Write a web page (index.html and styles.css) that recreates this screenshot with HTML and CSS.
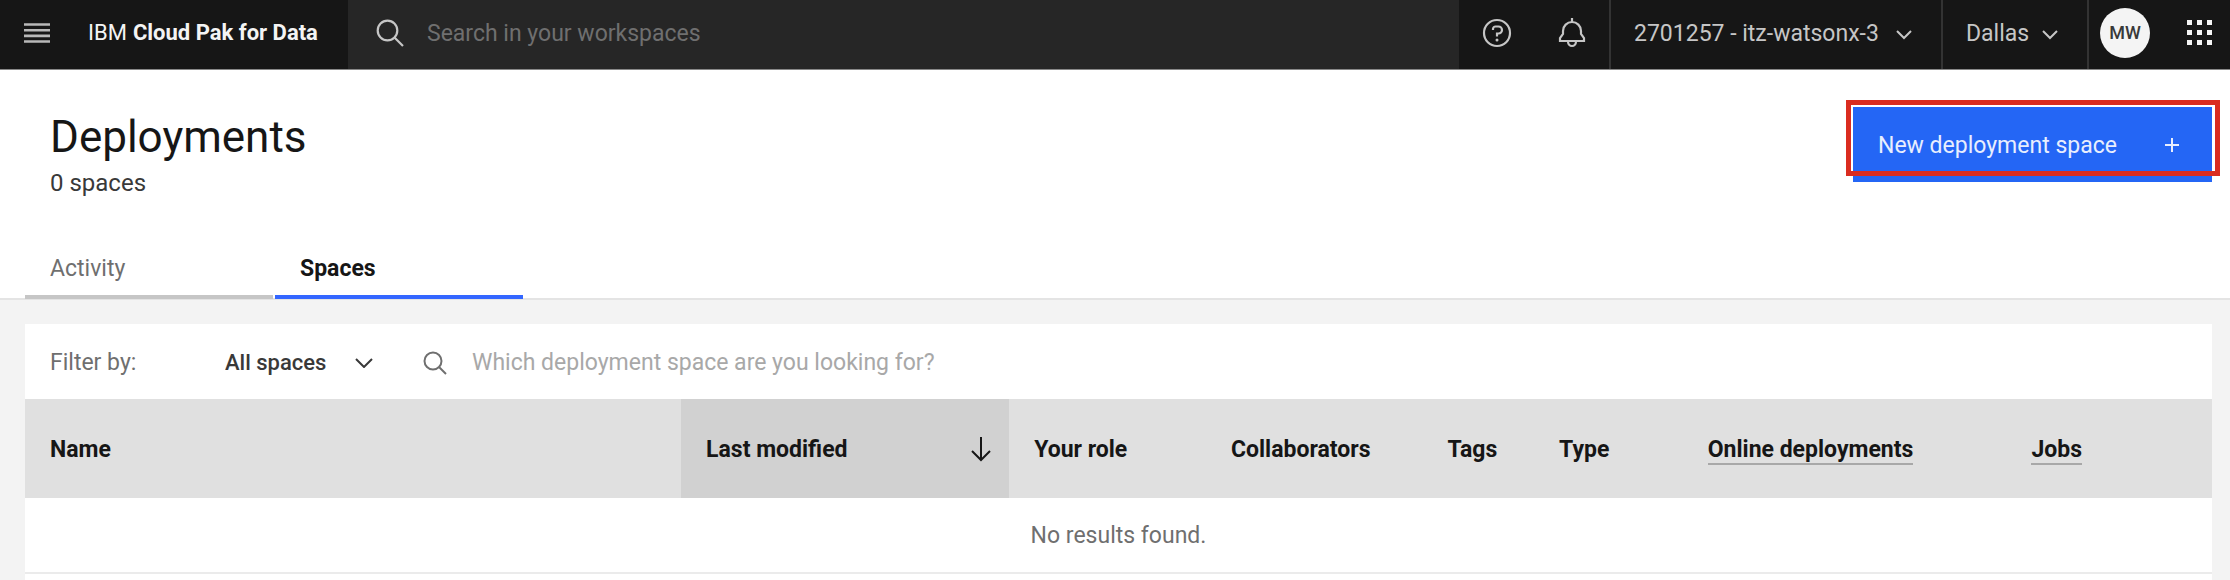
FILE: index.html
```html
<!DOCTYPE html>
<html lang="en">
<head>
<meta charset="utf-8">
<title>Deployments - IBM Cloud Pak for Data</title>
<link rel="stylesheet" href="styles.css">
</head>
<body>
<header class="topbar">
  <button class="icon-button menu-button" aria-label="Menu">
    <svg width="26" height="20" viewBox="0 0 26 20" stroke="currentColor" stroke-width="2.600"><path d="M0 1.500h26M0 7.200h26M0 12.900h26M0 18.500h26"/></svg>
  </button>
  <a class="brand" href="#">IBM <b>Cloud Pak for Data</b></a>
  <label class="global-search">
    <svg width="28" height="28" viewBox="0 0 28 28" fill="none" stroke="currentColor" stroke-width="2.200"><circle cx="11.500" cy="11.500" r="9.800"/><path d="M18.500 18.500L27 27"/></svg>
    <input class="global-input" type="search" aria-label="Search in your workspaces" placeholder="Search in your workspaces">
  </label>
  <div class="tools">
    <button class="icon-button tool" aria-label="Help">
      <svg width="30" height="30" viewBox="0 0 30 30" fill="none" stroke="currentColor" stroke-width="2.200"><circle cx="15" cy="15" r="13"/><path d="M11 12v-1a2.500 2.500 0 0 1 2.500-2.500h3a3.500 3.500 0 0 1 0 7H15V18.500"/><circle cx="15" cy="22" r="1.500" fill="currentColor" stroke="none"/></svg>
    </button>
    <button class="icon-button tool" aria-label="Notifications">
      <svg width="30" height="30" viewBox="0 0 30 30" fill="none" stroke="currentColor" stroke-width="2.200"><path d="M15 0v4M3 23v-3l3-4v-3a9 9 0 0 1 18 0v3l3 4v3zM11 23.500a4 4.500 0 0 0 8 0"/></svg>
    </button>
  </div>
  <button class="switcher account">2701257 - itz-watsonx-3
    <svg width="16" height="10" viewBox="0 0 16 10" fill="none" stroke="currentColor" stroke-width="2"><path d="M1 1l7 7 7-7"/></svg>
  </button>
  <button class="switcher region">Dallas
    <svg width="16" height="10" viewBox="0 0 16 10" fill="none" stroke="currentColor" stroke-width="2"><path d="M1 1l7 7 7-7"/></svg>
  </button>
  <div class="profile">
    <button class="avatar">MW</button>
    <button class="icon-button apps" aria-label="App switcher">
      <svg width="26" height="26" viewBox="0 0 26 26" fill="currentColor"><path d="M0 0h5v5H0zM10 0h5v5h-5zM20 0h5v5h-5zM0 10h5v5H0zM10 10h5v5h-5zM20 10h5v5h-5zM0 20h5v5H0zM10 20h5v5h-5zM20 20h5v5h-5z"/></svg>
    </button>
  </div>
</header>
<main>
  <section class="page-head">
    <div class="title-row">
      <div>
        <h1>Deployments</h1>
        <p class="count">0 spaces</p>
      </div>
      <button class="primary">New deployment space
        <svg width="14" height="14" viewBox="0 0 14 14" stroke="currentColor" stroke-width="2"><path d="M7 0v14M0 7h14"/></svg>
      </button>
    </div>
    <nav class="tabs">
      <a class="tab" href="#">Activity</a>
      <a class="tab active" href="#" aria-current="page">Spaces</a>
    </nav>
  </section>
  <section class="panel">
    <div class="filters">
      <label class="filter-label" for="filter">Filter by:</label>
      <div class="select">
        <select id="filter"><option>All spaces</option></select>
        <svg width="18" height="10" viewBox="0 0 18 10" fill="none" stroke="currentColor" stroke-width="2"><path d="M1 1l8 8 8-8"/></svg>
      </div>
      <label class="space-search">
        <svg width="24" height="24" viewBox="0 0 24 24" fill="none" stroke="currentColor" stroke-width="2"><circle cx="10" cy="10" r="8.500"/><path d="M16 16l7 7"/></svg>
        <input class="space-input" type="search" aria-label="Find a deployment space" placeholder="Which deployment space are you looking for?">
      </label>
    </div>
    <table>
      <colgroup><col class="c-name"><col class="c-modified"><col class="c-role"><col class="c-collab"><col class="c-tags"><col class="c-type"><col class="c-online"><col class="c-jobs"></colgroup>
      <thead>
        <tr>
          <th>Name</th>
          <th class="sorted" aria-sort="descending"><button class="sort">Last modified
            <svg width="20" height="26" viewBox="0 0 20 26" fill="none" stroke="currentColor" stroke-width="2"><path d="M10 0v23M1 14l9 9 9-9"/></svg></button></th>
          <th>Your role</th>
          <th>Collaborators</th>
          <th>Tags</th>
          <th>Type</th>
          <th><span class="hint">Online deployments</span></th>
          <th><span class="hint">Jobs</span></th>
        </tr>
      </thead>
      <tbody><tr><td colspan="8">No results found.</td></tr></tbody>
    </table>
  </section>
</main>
</body>
</html>
```
FILE: styles.css
```css
* { box-sizing: border-box; }
body {
  margin: 0;
  min-height: 100vh;
  background: #f3f3f3;
  color: #161616;
  font: 23px/32px Roboto, "Liberation Sans", sans-serif;
  overflow-x: hidden;
}
button, input, select { font: inherit; color: inherit; background: none; border: 0; padding: 0; margin: 0; border-radius: 0; }
a { color: inherit; text-decoration: none; }
svg { display: block; flex: none; }
h1, p { margin: 0; }

.topbar { display: flex; height: 70px; background: #161616; color: #c6c6c6; border-bottom: 1px solid #888; }
.icon-button { display: flex; align-items: center; justify-content: center; }
.menu-button { width: 74px; padding-bottom: 4px; color: #b8b8b8; }
.brand { display: flex; align-items: center; gap: 6px; width: 274px; padding: 0 0 4px 14px; color: #f4f4f4; font-size: 22px; white-space: nowrap; }
.brand b { font-weight: 700; }
.global-search { flex: 1; display: flex; align-items: center; gap: 23px; padding: 0 28px 4px; background: #262626; }
.global-input { flex: 1; outline: 0; padding-top: 2px; }
.global-input::placeholder { color: #6f6f6f; opacity: 1; }
.tools { display: flex; width: 150px; padding-bottom: 4px; }
.tool { flex: 1; }
.switcher { display: flex; align-items: center; justify-content: space-between; padding: 0 29px 2px 23px; border-left: 2px solid #333; white-space: nowrap; }
.switcher svg { margin-top: 2px; }
.account { width: 332px; }
.region { width: 146px; }
.profile { display: flex; align-items: center; gap: 37px; padding: 0 17px 4px 11px; border-left: 2px solid #333; }
.avatar { width: 50px; height: 50px; border-radius: 50%; background: #f4f4f4; color: #393939; font-size: 18px; font-weight: 500; }
.apps { color: #f4f4f4; }

.page-head { background: #fff; border-bottom: 2px solid #e4e4e4; padding: 37px 18px 0 25px; }
.title-row { display: flex; justify-content: space-between; padding-left: 25px; height: 124px; }
h1 { font-size: 44px; line-height: 60px; font-weight: 400; }
.count { color: #393939; font-size: 24px; }
.primary { position: relative; display: flex; justify-content: space-between; width: 359px; height: 75px; background: #2466f5; color: #e8eefe; padding: 23px 33px 0 25px; }
.primary::after { content: ""; position: absolute; inset: -7px -8px 6px -7px; border: 5px solid #da2c20; }
.primary svg { margin-top: 8px; }
.tabs { display: flex; gap: 2px; }
.tab { width: 248px; padding: 22px 25px 10px; border-bottom: 4px solid #c6c6c6; color: #6f6f6f; margin-bottom: -1px; }
.active { border-color: #3366ff; color: #161616; font-weight: 700; }

.panel { margin: 24px 18px 0 25px; background: #fff; }
.filters { display: flex; align-items: center; height: 75px; padding: 2px 0 0 25px; }
.filter-label { width: 175px; color: #6f6f6f; }
.select { display: grid; align-items: center; width: 198px; color: #393939; }
.select select { grid-area: 1 / 1; appearance: none; font-size: 22px; font-weight: 500; width: 150px; }
.select svg { grid-area: 1 / 1; margin-left: 130px; pointer-events: none; }
.space-search { flex: 1; display: flex; align-items: center; gap: 25px; color: #6f6f6f; }
.space-input { flex: 1; outline: 0; }
.space-input::placeholder { color: #a8a8a8; opacity: 1; }

table { width: 100%; table-layout: fixed; border-collapse: collapse; }
.c-name { width: 30%; }
.c-modified { width: 15%; }
.c-role { width: 9%; }
.c-collab { width: 9.9%; }
.c-tags { width: 5.1%; }
.c-type { width: 6.8%; }
.c-online { width: 14.8%; }
.c-jobs { width: 9.4%; }
th { height: 99px; background: #e0e0e0; text-align: left; font-weight: 700; padding: 2px 0 0 25px; white-space: nowrap; }
.sorted { background: #d1d1d1; padding-right: 18px; }
.sort { display: flex; width: 100%; align-items: center; justify-content: space-between; }
.hint { border-bottom: 2px solid #a8a8a8; }
td { height: 75px; padding: 2px 0 0; text-align: center; color: #6f6f6f; border-bottom: 2px solid #ebebeb; }
tbody::after { content: ""; display: table-row; height: 20px; }
```
